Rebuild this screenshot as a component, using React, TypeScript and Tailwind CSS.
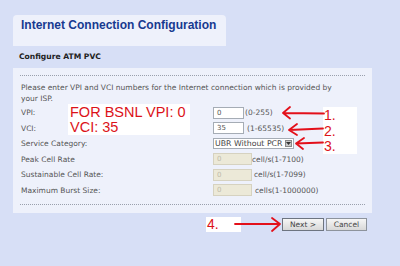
import React from "react";

const form = "font-['DejaVu_Sans',sans-serif] text-[7.5px] text-[#555]";

function Row({ label, children }: { label: string; children: React.ReactNode }) {
  return (
    <div className="flex h-[15.5px] items-center">
      <div className="w-[192px] shrink-0">{label}</div>
      <div className="flex items-center">{children}</div>
    </div>
  );
}

function TextBox({ value, disabled, w }: { value: string; disabled?: boolean; w: string }) {
  return (
    <div
      className={`${w} h-[12px] border flex items-center pl-[3px] text-[7px] ${
        disabled ? "bg-[#ece9d8] border-[#d6d2c0] text-[#c0bba8]" : "bg-white border-[#a5acb5] text-[#555]"
      }`}
    >
      {value}
    </div>
  );
}

export default function App() {
  return (
    <div className="relative w-[400px] h-[266px] overflow-hidden bg-[#d7dff6] pt-[15px] pl-[13px]">
      <div className="w-[213px] h-[31px] bg-[#eef1fb] rounded-t-[4px] pl-[8px] pt-[3px]">
        <div className="font-['Liberation_Sans',Arial,sans-serif] font-bold text-[12px] text-[#173a90] leading-[14px]">
          Internet Connection Configuration
        </div>
      </div>
      <div className="h-[22px] flex items-center pl-[6px] font-['DejaVu_Sans',sans-serif] font-bold text-[7.6px] text-[#222]">
        Configure ATM PVC
      </div>
      <div className={`w-[359px] h-[145px] bg-[#eef1fb] pt-[7px] px-[7px] ${form}`}>
        <div className="border-t border-dotted border-[#9aa0ad]" />
        <div className="pl-[1px] pt-[6px] leading-[11px]">
          Please enter VPI and VCI numbers for the Internet connection which is provided by
          <br />
          your ISP.
        </div>
        <div className="pl-[1px] pt-[1px]">
          <Row label="VPI:">
            <TextBox value="0" w="w-[31px]" />
            <span className="ml-[1px]">(0-255)</span>
          </Row>
          <Row label="VCI:">
            <TextBox value="35" w="w-[31px]" />
            <span className="ml-[3px]">(1-65535)</span>
          </Row>
          <Row label="Service Category:">
            <div className="w-[81px] h-[11px] bg-white border border-[#a5acb5] flex items-center justify-between pl-[1px] pr-[1px] text-[7.8px] text-[#444]">
              <span>UBR Without PCR</span>
              <span className="w-[7px] h-[7px] bg-[#c9c9c9] border border-[#888] flex items-center justify-center">
                <svg width="5" height="3" viewBox="0 0 5 3"><path d="M0 0h5L2.5 3z" fill="#333" /></svg>
              </span>
            </div>
          </Row>
          <Row label="Peak Cell Rate">
            <TextBox value="0" w="w-[39px]" disabled />
            <span>cell/s(1-7100)</span>
          </Row>
          <Row label="Sustainable Cell Rate:">
            <TextBox value="0" w="w-[39px]" disabled />
            <span className="ml-[2px]">cell/s(1-7099)</span>
          </Row>
          <Row label="Maximum Burst Size:">
            <TextBox value="0" w="w-[39px]" disabled />
            <span className="ml-[3px]">cells(1-1000000)</span>
          </Row>
        </div>
        <div className="mt-[6px] border-t border-dotted border-[#9aa0ad]" />
      </div>
      <div className="flex justify-end gap-[2px] w-[354px] mt-[5px] font-['DejaVu_Sans',sans-serif] text-[7.5px] text-[#444]">
        <div className="w-[42px] h-[13px] border border-[#6d7480] bg-gradient-to-b from-[#f6f6f6] to-[#d8d8d8] flex items-center justify-center">
          Next &gt;
        </div>
        <div className="w-[41px] h-[13px] border border-[#8d939c] bg-gradient-to-b from-[#f6f6f6] to-[#d8d8d8] flex items-center justify-center">
          Cancel
        </div>
      </div>

      {/* annotations */}
      <div className="absolute left-[68px] top-[104px] w-[122px] h-[31px] bg-white font-['Liberation_Sans',Arial,sans-serif] text-[14.5px] leading-[15px] text-[#dc1219] pl-[2px] pt-[1px]">
        FOR BSNL VPI: 0
        <br />
        VCI: 35
      </div>
      <div className="absolute left-[323px] top-[107px] w-[34px] h-[47px] bg-white font-['Liberation_Sans',Arial,sans-serif] text-[14px] leading-[15.5px] text-[#dc1219] pl-[1px] pt-[1px]">
        1.
        <br />
        2.
        <br />
        3.
      </div>
      <div className="absolute left-[206px] top-[217px] w-[35px] h-[15px] bg-white font-['Liberation_Sans',Arial,sans-serif] text-[14px] leading-[15px] text-[#dc1219] pl-[1px]">
        4.
      </div>
      <svg className="absolute left-0 top-0" width="400" height="266" viewBox="0 0 400 266">
        <g stroke="#e3101a" strokeWidth="1.8" fill="none" strokeLinecap="round" strokeLinejoin="round">
          <path d="M283 113 L324 113.5 M290 107 L283 113 L290 118.5" />
          <path d="M289 130 L323 128.5 M297 124 L289 130 L297 135" />
          <path d="M296 143.5 L323 142.5 M304 138 L296 143.5 L303 149" />
          <path d="M235 224 L280 224 M272 218 L280 224 L272 231" />
        </g>
      </svg>
    </div>
  );
}
